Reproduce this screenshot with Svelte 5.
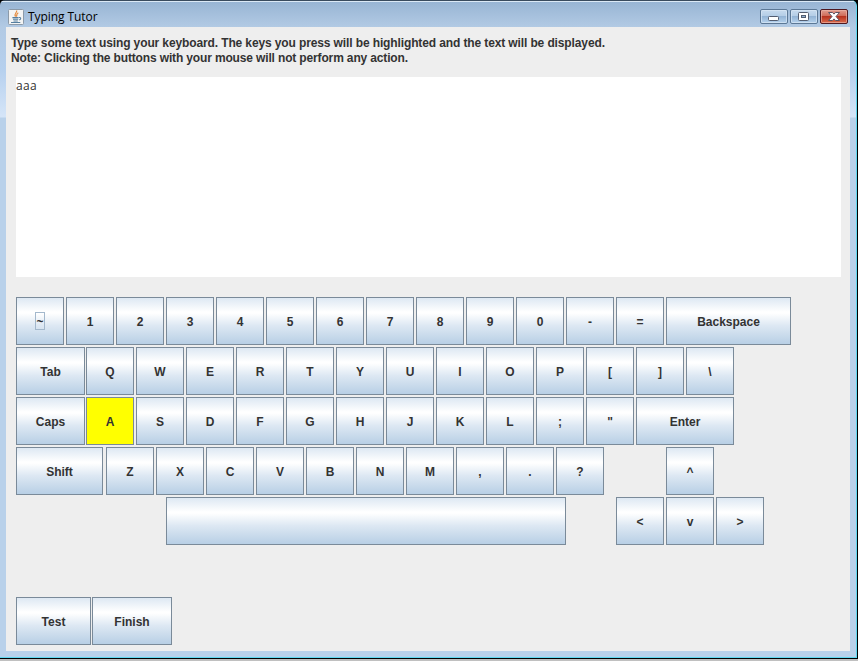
<script>
  const k = (label, gap = 2, width = 48) => ({ label, gap, width });
  const rows = [
    [k('~', 0), ...'1234567890-='.split('').map((c) => k(c)), k('Backspace', 2, 125)],
    [k('Tab', 0, 69), k('Q', 1), ...'WERTYUIOP[]\\'.split('').map((c) => k(c))],
    [k('Caps', 0, 69), k('A', 1), ...'SDFGHJKL;"'.split('').map((c) => k(c)), k('Enter', 2, 98)],
    [k('Shift', 0, 87), k('Z', 3), ...'XCVBNM,.?'.split('').map((c) => k(c)), k('^', 62)],
    [k('', 150, 400), k('<', 50), k('v'), k('>')]
  ];
  const pressed = 'A';
  const focused = '~';
</script>

<div class="screen">
  <div class="window">
    <header class="titlebar">
      <svg class="logo" width="16" height="16" viewBox="0 0 16 16">
        <rect x=".5" y=".5" width="15" height="15" rx="1" fill="#f3f4f4" stroke="#8c9aa8" />
        <path d="M8.6 1.5C9.5 3.6 5.6 4.3 7.5 7.6M10.3 3.7C7.6 5.1 9.7 5.8 8.3 7.7" fill="none" stroke="#e58a3c" stroke-width="1.2" />
        <path d="M4.4 8.6h6.2M5 10.3h5.2M5.5 11.9h4.3M3 13.5h9.3M11 8.6c2.5-.4 2 1.8.2 2.3" fill="none" stroke="#567f9f" stroke-width="1.05" />
      </svg>
      <span class="title">Typing Tutor</span>
      <div class="controls">
        <svg class="ctl" width="28" height="15" viewBox="0 0 28 15">
          <rect x=".5" y=".5" width="27" height="14" rx="1.5" fill="url(#glass)" stroke="#5c7896" />
          <rect x="1.5" y="1.5" width="25" height="12" rx="1" fill="none" stroke="#d9e7f5" stroke-opacity=".7" />
          <rect x="8.5" y="7.5" width="10" height="4" rx="1" fill="#fff" stroke="#535d70" />
        </svg>
        <svg class="ctl" width="28" height="15" viewBox="0 0 28 15">
          <rect x=".5" y=".5" width="27" height="14" rx="1.5" fill="url(#glass)" stroke="#5c7896" />
          <rect x="1.5" y="1.5" width="25" height="12" rx="1" fill="none" stroke="#d9e7f5" stroke-opacity=".7" />
          <rect x="8.5" y="3.5" width="10" height="8" rx="1" fill="#fff" stroke="#535d70" />
          <rect x="11.5" y="6.5" width="4" height="2" fill="#91b2d3" stroke="#535d70" />
        </svg>
        <svg class="ctl" width="28" height="15" viewBox="0 0 28 15">
          <defs>
            <linearGradient id="glass" x2="0" y2="1">
              <stop offset="0" stop-color="#c9dcef" /><stop offset=".46" stop-color="#b4cde6" />
              <stop offset=".5" stop-color="#94b4d5" /><stop offset="1" stop-color="#b8d4ef" />
            </linearGradient>
            <linearGradient id="red" x2="0" y2="1">
              <stop offset="0" stop-color="#e2a195" /><stop offset=".46" stop-color="#cf6a58" />
              <stop offset=".5" stop-color="#b7321f" /><stop offset="1" stop-color="#dc7050" />
            </linearGradient>
          </defs>
          <rect x=".5" y=".5" width="27" height="14" rx="1.5" fill="url(#red)" stroke="#4d1820" />
          <rect x="1.5" y="1.5" width="25" height="12" rx="1" fill="none" stroke="#efb9ad" stroke-opacity=".6" />
          <path d="M8.5 3.5h4l1.5 1.6 1.5-1.6h4l-3.5 4 3.5 4h-4L14 9.9l-1.5 1.6h-4l3.5-4z" fill="#fff" stroke="#5d5261" stroke-width="1" stroke-linejoin="round" />
        </svg>
      </div>
    </header>
    <main>
      <p class="line first">Type some text using your keyboard. The keys you press will be highlighted and the text will be displayed.</p>
      <p class="line second">Note: Clicking the buttons with your mouse will not perform any action.</p>
      <div class="output">aaa</div>
      <div class="keyboard">
        {#each rows as row}
          <div class="row">
            {#each row as key}
              <button
                class="key"
                class:pressed={key.label === pressed}
                style="width: {key.width}px; margin-left: {key.gap}px"
              ><span class="label" class:focus={key.label === focused}>{key.label}</span></button>
            {/each}
          </div>
        {/each}
      </div>
      <div class="actions">
        <button class="key test"><span class="label">Test</span></button>
        <button class="key finish"><span class="label">Finish</span></button>
      </div>
    </main>
  </div>
</div>

<style>
  .screen {
    box-sizing: border-box;
    width: 858px;
    height: 661px;
    padding: 0 1px 3px 0;
    background: linear-gradient(#000 0 659px, #c0c0c0 659px);
    font-family: 'Liberation Sans', Arial, sans-serif;
    overflow: hidden;
  }
  .window {
    box-sizing: border-box;
    height: 658px;
    padding: 0 6px 6px;
    border: solid #5fd8f0;
    border-width: 0 1px 1px 0;
    border-radius: 5px 6px 0 0;
    background: linear-gradient(#394b5e 0 1px, #dbe9f6 1px 2px, #98b5d4 2px, #b2cae4 27px, #b6d0ee 70px, #d5e5f8 117px, #b9d1ea 118px);
  }
  .titlebar {
    display: flex;
    align-items: flex-start;
    height: 27px;
    box-sizing: border-box;
    padding: 9px 2px 0;
  }
  .logo { flex: none; }
  .title {
    margin-left: 4px;
    font: 12px/16px 'Open Sans', 'Noto Sans', sans-serif;
    letter-spacing: -.07px;
    color: #000;
    white-space: nowrap;
  }
  .controls { display: flex; gap: 2px; margin-left: auto; }
  .ctl { display: block; }
  main {
    box-sizing: border-box;
    height: 624px;
    padding: 9px 10px 0;
    background: #eee;
  }
  .line {
    margin: 0 0 0 -5px;
    font-size: 12px;
    line-height: 15px;
    font-weight: bold;
    color: #333;
    white-space: nowrap;
  }
  .first { letter-spacing: -.12px; }
  .second { letter-spacing: -.147px; }
  .output {
    box-sizing: border-box;
    width: 825px;
    height: 200px;
    margin-top: 11px;
    background: #fff;
    color: #333;
    font: 12px/18px 'Open Sans', 'Noto Sans', sans-serif;
    letter-spacing: .33px;
  }
  .keyboard { display: flex; flex-direction: column; gap: 2px; margin-top: 20px; }
  .row { display: flex; height: 48px; }
  .key {
    flex: none;
    box-sizing: border-box;
    display: flex;
    align-items: center;
    justify-content: center;
    height: 48px;
    margin: 0;
    padding: 0;
    border: 1px solid #7a8a99;
    border-radius: 0;
    background: linear-gradient(#dde8f3 0, #fff 30%, #fff 33%, #dde8f3 60%, #b8cfe5 100%);
    color: #333;
    font: bold 12px/18px 'Liberation Sans', Arial, sans-serif;
  }
  .label { display: block; height: 16px; line-height: 18px; }
  .pressed { background: #ff0; }
  .focus { outline: 1px solid #a3b8cc; }
  .actions { display: flex; gap: 1px; margin-top: 52px; }
  .test { width: 75px; }
  .finish { width: 80px; }
</style>
